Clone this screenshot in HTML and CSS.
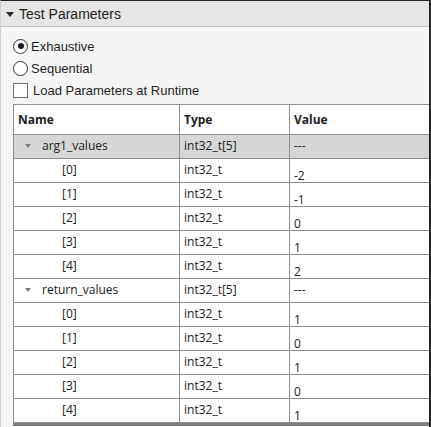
FILE: index.html
```html
<!DOCTYPE html>
<html>
<head>
<meta charset="utf-8">
<link rel="stylesheet" href="styles.css">
</head>
<body>
<div class="panel">
  <div class="header"><span class="caret"></span><span class="title">Test Parameters</span></div>
  <div class="options">
    <label class="opt"><span class="radio checked"></span>Exhaustive</label>
    <label class="opt"><span class="radio"></span>Sequential</label>
    <label class="opt"><span class="check"></span>Load Parameters at Runtime</label>
  </div>
  <div class="grid-wrap">
    <table class="grid">
      <colgroup><col class="c1"><col class="c2"><col class="c3"></colgroup>
      <thead>
        <tr><th>Name</th><th>Type</th><th>Value</th></tr>
      </thead>
      <tbody>
        <tr class="parent sel"><td><span class="tri"></span>arg1_values</td><td>int32_t[5]</td><td>---</td></tr>
        <tr class="child"><td>[0]</td><td>int32_t</td><td class="val">-2</td></tr>
        <tr class="child"><td>[1]</td><td>int32_t</td><td class="val">-1</td></tr>
        <tr class="child"><td>[2]</td><td>int32_t</td><td class="val">0</td></tr>
        <tr class="child"><td>[3]</td><td>int32_t</td><td class="val">1</td></tr>
        <tr class="child"><td>[4]</td><td>int32_t</td><td class="val">2</td></tr>
        <tr class="parent"><td><span class="tri"></span>return_values</td><td>int32_t[5]</td><td>---</td></tr>
        <tr class="child"><td>[0]</td><td>int32_t</td><td class="val">1</td></tr>
        <tr class="child"><td>[1]</td><td>int32_t</td><td class="val">0</td></tr>
        <tr class="child"><td>[2]</td><td>int32_t</td><td class="val">1</td></tr>
        <tr class="child"><td>[3]</td><td>int32_t</td><td class="val">0</td></tr>
        <tr class="child"><td>[4]</td><td>int32_t</td><td class="val">1</td></tr>
      </tbody>
    </table>
  </div>
</div>
</body>
</html>
```
FILE: styles.css
```css
html, body { margin: 0; padding: 0; background: #f5f5f5; }
.panel {
  width: 431px;
  height: 427px;
  box-sizing: border-box;
  border-top: 1px solid #262626;
  border-right: 2px solid #262626;
  border-left: 1px solid #d0d0d0;
  background: #f5f5f5;
  overflow: hidden;
  font-family: "Liberation Sans", Arial, sans-serif;
  color: #1f1f1f;
}
.header {
  height: 25px;
  background: #e6e6e6;
  border-bottom: 1px solid #c2c2c2;
  display: flex;
  align-items: center;
  padding-left: 5px;
}
.caret {
  width: 0; height: 0;
  border-left: 4px solid transparent;
  border-right: 4px solid transparent;
  border-top: 5px solid #262626;
  margin-right: 5px;
  margin-top: 1px;
}
.title { font-size: 14px; line-height: 16px; }
.options { padding: 8px 0 3px 12px; }
.opt {
  display: flex;
  align-items: center;
  height: 22px;
  font-size: 13px;
}
.radio {
  width: 13px; height: 13px;
  border: 1px solid #333;
  border-radius: 50%;
  background: #fff;
  margin-right: 3px;
  display: flex;
  align-items: center;
  justify-content: center;
}
.radio.checked::after {
  content: "";
  width: 6px; height: 6px;
  border-radius: 50%;
  background: #1a1a1a;
}
.check {
  width: 13px; height: 13px;
  border: 1px solid #707070;
  background: #fff;
  margin-right: 5px;
}
.grid-wrap {
  margin-left: 12px;
  border-bottom: 3px solid #7c7c7c;
  background: #fff;
}
.grid {
  border-collapse: separate;
  border-spacing: 0;
  table-layout: fixed;
  width: 440px;
  border-top: 1px solid #8f8f8f;
  border-left: 1px solid #8f8f8f;
  font-family: "Open Sans", "Noto Sans", sans-serif;
  font-size: 12px;
  line-height: 16px;
  color: #212121;
  background: #fff;
}
.c1 { width: 166px; }
.c2 { width: 110px; }
.grid th, .grid td {
  border-right: 1px solid #8f8f8f;
  border-bottom: 1px solid #8f8f8f;
  padding: 0 0 0 4px;
  text-align: left;
  white-space: nowrap;
  box-sizing: border-box;
}
.grid th {
  height: 30px;
  font-weight: bold;
  padding-top: 1px;
}
.grid td {
  height: 24px;
  padding-bottom: 1px;
  vertical-align: middle;
}
.sel td { background: #d6d6d6; }
.parent td:first-child { padding-left: 11px; }
.tri {
  display: inline-block;
  width: 0; height: 0;
  border-left: 3.5px solid transparent;
  border-right: 3.5px solid transparent;
  border-top: 4px solid #7a7a7a;
  margin-right: 11px;
  vertical-align: 2px;
}
.child td:first-child { padding-left: 48px; }
.child td.val {
  vertical-align: top;
  line-height: 12px;
  padding-top: 11px;
  padding-bottom: 0;
}
```
